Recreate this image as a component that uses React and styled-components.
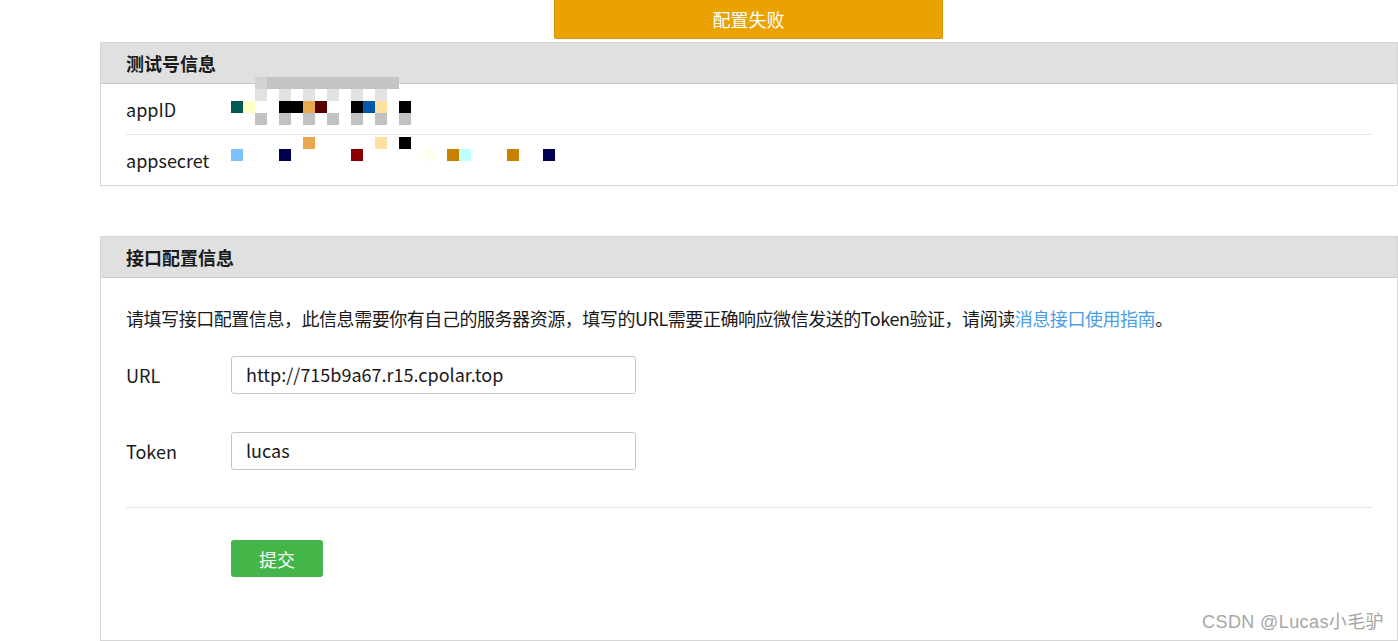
import React from 'react'
import styled, { createGlobalStyle } from 'styled-components'

const GlobalStyle = createGlobalStyle`
  html, body {
    margin: 0;
    padding: 0;
    background: #fff;
  }
  body {
    font-family: "Noto Sans CJK SC", "Noto Sans", sans-serif;
    color: #222;
  }
`

const appIdRows = [
  { top: 77, h: 12, cells: [null, null, '#d2d2d2', '#c4c4c4', '#c4c4c4', '#c4c4c4', '#c4c4c4', '#c4c4c4', '#c4c4c4', '#c4c4c4', '#c4c4c4', '#c4c4c4', '#c4c4c4', '#c4c4c4'] },
  { top: 89, h: 12, cells: [null, null, '#e2e2e2', null, '#e2e2e2', null, '#e2e2e2', null, '#e2e2e2', null, '#e2e2e2', null, '#e2e2e2'] },
  { top: 101, h: 12, cells: ['#005a50', '#ffffc8', null, null, '#000', '#000', '#e8a850', '#580000', null, null, '#000', '#0058a8', '#ffe0a0', null, '#000'] },
  { top: 113, h: 12, cells: [null, null, '#c2c2c2', null, '#c2c2c2', null, '#c2c2c2', null, '#c2c2c2', null, '#c2c2c2', null, '#c2c2c2', null, '#c2c2c2'] },
]

const secretRows = [
  { top: 137, h: 12, cells: [null, null, null, null, null, null, '#e8a850', null, null, null, null, null, '#ffe0a0', null, '#000'] },
  { top: 149, h: 12, cells: ['#80c0ff', null, null, null, '#000050', null, null, null, null, null, '#880000', null, null, null, null, null, '#fffff0', null, '#c88000', '#c0ffff', null, null, null, '#c88000', null, null, '#000050'] },
]

const App = () => {
  return (
    <>
      <GlobalStyle />
      <Page>
        <StatusBar>配置失败</StatusBar>

        <Panel>
          <PanelHead>测试号信息</PanelHead>
          <PanelBody>
            <InfoRow>
              <Label>appID</Label>
              <Value>
                <Mosaic rows={appIdRows} base={84} />
              </Value>
            </InfoRow>
            <InfoRow last>
              <Label>appsecret</Label>
              <Value>
                <Mosaic rows={secretRows} base={135} />
              </Value>
            </InfoRow>
          </PanelBody>
        </Panel>

        <Panel gap>
          <PanelHead>接口配置信息</PanelHead>
          <FormBody>
            <Desc>
              请填写接口配置信息，此信息需要你有自己的服务器资源，填写的URL需要正确响应微信发送的Token验证，请阅读
              <DocLink href="#">消息接口使用指南</DocLink>。
            </Desc>
            <Fields>
              <FieldRow>
                <Label>URL</Label>
                <Input defaultValue="http://715b9a67.r15.cpolar.top" />
              </FieldRow>
              <FieldRow>
                <Label>Token</Label>
                <Input defaultValue="lucas" />
              </FieldRow>
            </Fields>
            <Divider />
            <Actions>
              <SubmitButton>提交</SubmitButton>
            </Actions>
          </FormBody>
          <Watermark>CSDN @Lucas小毛驴</Watermark>
        </Panel>
      </Page>
    </>
  )
}

// pixelated (censored) value, drawn as colour cells over the row
const Mosaic = ({ rows, base }) => (
  <MosaicBox>
    {rows.map((r, i) => (
      <MosaicLine key={i} style={{ top: r.top - base }}>
        {r.cells.map((c, j) => (
          <Cell key={j} color={c} />
        ))}
      </MosaicLine>
    ))}
  </MosaicBox>
)

export default App

const Page = styled.div`
  padding-left: 100px;
  width: 1298px;
`

const StatusBar = styled.div`
  width: 389px;
  height: 39px;
  margin-left: 454px;
  box-sizing: border-box;
  background: #eaa200;
  border: 1px solid #d69300;
  border-top: none;
  color: #fff;
  font-size: 18px;
  line-height: 38px;
  text-align: center;
  border-radius: 0 0 2px 2px;
`

const Panel = styled.div`
  position: relative;
  margin-top: ${p => (p.gap ? '50px' : '3px')};
  border: 1px solid #d6d6d6;
  background: #fff;
`

const PanelHead = styled.div`
  height: 40px;
  line-height: 40px;
  padding: 0 25px;
  background: #e0e0e0;
  border-bottom: 1px solid #c9c9c9;
  font-size: 18px;
  font-weight: 700;
  color: #1a1a1a;
`

const PanelBody = styled.div`
  padding: 0 25px;
`

const InfoRow = styled.div`
  display: flex;
  align-items: center;
  height: 50px;
  line-height: 48px;
  border-bottom: ${p => (p.last ? 'none' : '1px solid #e4e4e4')};
`

const Label = styled.div`
  width: 105px;
  flex-shrink: 0;
  font-size: 18px;
  color: #1a1a1a;
`

const Value = styled.div`
  position: relative;
  align-self: stretch;
  flex: 1;
`

const MosaicBox = styled.div`
  position: absolute;
  left: 0;
  top: 0;
`

const MosaicLine = styled.div`
  position: absolute;
  left: 0;
  display: flex;
`

const Cell = styled.span`
  width: 12px;
  height: 12px;
  flex-shrink: 0;
  background: ${p => p.color || 'transparent'};
`

const FormBody = styled.div`
  padding: 28px 25px 63px;
`

const Desc = styled.p`
  margin: 0;
  font-size: 18px;
  line-height: 24px;
  letter-spacing: -0.45px;
  color: #1a1a1a;
`

const DocLink = styled.a`
  color: #4a9ee8;
  text-decoration: none;
`

const Fields = styled.div`
  display: flex;
  flex-direction: column;
  gap: 38px;
  margin-top: 26px;
  line-height: 22px;
`

const FieldRow = styled.div`
  display: flex;
  align-items: center;
`

const Input = styled.input`
  width: 405px;
  height: 38px;
  box-sizing: border-box;
  padding: 0 14px 2px;
  border: 1px solid #c6c6c6;
  border-radius: 3px;
  font-family: "Noto Sans CJK SC", "Noto Sans", sans-serif;
  font-size: 18px;
  color: #1a1a1a;
  outline: none;
`

const Divider = styled.div`
  height: 1px;
  background: #e4e4e4;
  margin: 37px 0 32px;
`

const Actions = styled.div`
  padding-left: 105px;
`

const SubmitButton = styled.button`
  width: 92px;
  height: 37px;
  border: none;
  border-radius: 3px;
  background: #44b549;
  color: #fff;
  font-family: "Noto Sans CJK SC", "Noto Sans", sans-serif;
  font-size: 18px;
  cursor: pointer;
`

const Watermark = styled.div`
  position: absolute;
  right: 13px;
  bottom: 7px;
  font-family: "Liberation Sans", "Noto Sans CJK SC", sans-serif;
  font-size: 18px;
  letter-spacing: 0.4px;
  color: #a6a6a6;
`
